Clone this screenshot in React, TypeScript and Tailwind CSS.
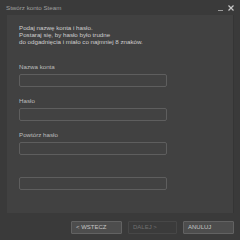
import React from 'react';

const Field: React.FC<{ label?: string }> = ({ label }) => (
  <div className="flex flex-col">
    <div className="h-[8px] text-[6.2px] leading-[8px] text-[#bdbdbd]">{label}</div>
    <div className="mt-[3px] h-[13px] w-[148px] rounded-[2px] border border-[#5e5e5e] bg-[#424242]" />
  </div>
);

const App: React.FC = () => {
  return (
    <div
      className="w-[240px] h-[240px] bg-[#3a3a3a] flex flex-col overflow-hidden"
      style={{ fontFamily: '"Liberation Sans", Arial, sans-serif' }}
    >
      {/* title bar */}
      <div className="h-[15px] flex items-start justify-between pl-[6px] pr-[6px] pt-[4px]">
        <span className="text-[6.2px] leading-[8px] text-[#a0a0a0]">Stwórz konto Steam</span>
        <div className="flex items-center gap-[5px]">
          <div className="w-[5px] h-[1px] bg-[#9a9a9a] mt-[6px]" />
          <svg width="6" height="6" viewBox="0 0 6 6" className="mt-[1px]">
            <path d="M0.5 0.5 L5.5 5.5 M5.5 0.5 L0.5 5.5" stroke="#c8c8c8" strokeWidth="1.2" />
          </svg>
        </div>
      </div>

      {/* content panel */}
      <div className="ml-[7px] mr-[6px] h-[198px] bg-[#414141] border-r border-[#353535] pl-[12px] pt-[9px]">
        <div className="text-[6.2px] leading-[7px] text-[#cfcfcf]">
          <p>Podaj nazwę konta i hasło.</p>
          <p>Postaraj się, by hasło było trudne</p>
          <p>do odgadnięcia i miało co najmniej 8 znaków.</p>
        </div>
        <div className="mt-[18px] flex flex-col gap-[10px]">
          <Field label="Nazwa konta" />
          <Field label="Hasło" />
          <Field label="Powtórz hasło" />
        </div>
        <div className="mt-[22px] h-[13px] w-[148px] rounded-[2px] border border-[#5e5e5e] bg-[#424242]" />
      </div>

      {/* buttons */}
      <div className="flex justify-end gap-[6px] pr-[6px] mt-[8px]">
        <button className="w-[51px] h-[13px] rounded-[1px] border border-[#626262] bg-[#4d4d4d] text-left pl-[4px] text-[6px] leading-[11px] text-[#c4c4c4]">
          &lt; WSTECZ
        </button>
        <button className="w-[49px] h-[13px] rounded-[1px] border border-[#474747] bg-[#3b3b3b] text-left pl-[4px] text-[6px] leading-[11px] text-[#707070]">
          DALEJ &gt;
        </button>
        <button className="w-[51px] h-[13px] rounded-[1px] border border-[#626262] bg-[#4d4d4d] text-left pl-[4px] text-[6px] leading-[11px] text-[#c4c4c4]">
          ANULUJ
        </button>
      </div>
    </div>
  );
};

export default App;
